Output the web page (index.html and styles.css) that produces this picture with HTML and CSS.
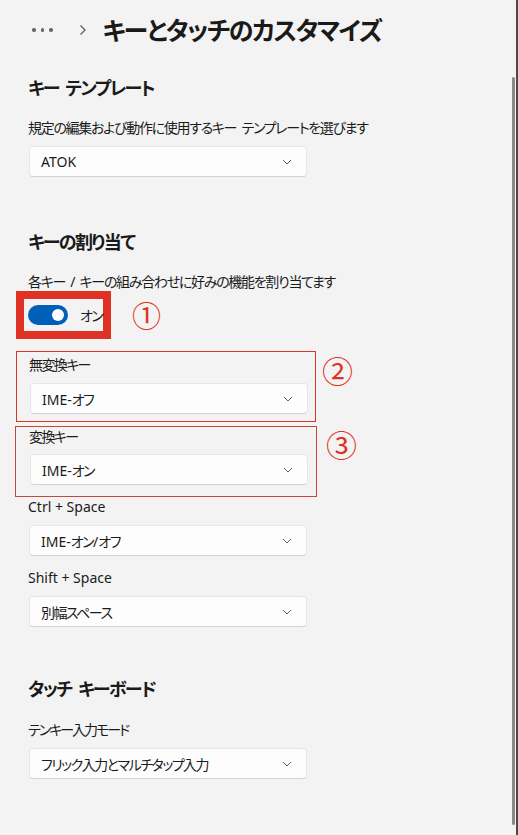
FILE: index.html
```html
<!DOCTYPE html>
<html lang="ja">
<head>
<meta charset="utf-8">
<link rel="stylesheet" href="styles.css">
</head>
<body>
<div class="page">
  <header class="header">
    <div class="dots"><span></span><span></span><span></span></div>
    <svg class="crumb" width="8" height="12" viewBox="0 0 8 12"><path d="M1.5 1.5 L6 6 L1.5 10.5" fill="none" stroke="#5c5c5c" stroke-width="1.3"/></svg>
    <h1 class="title">キーとタッチのカスタマイズ</h1>
  </header>

  <section class="sec sec-template">
    <h2 class="heading">キー テンプレート</h2>
    <p class="desc">規定の編集および動作に使用するキー テンプレートを選びます</p>
    <div class="dropdown"><span>ATOK</span><svg class="chev" width="10" height="6" viewBox="0 0 10 6"><path d="M1 1 L5 5 L9 1" fill="none" stroke="#606060" stroke-width="1"/></svg></div>
  </section>

  <section class="sec sec-assign">
    <h2 class="heading">キーの割り当て</h2>
    <p class="desc">各キー / キーの組み合わせに好みの機能を割り当てます</p>
    <div class="row row-toggle">
      <div class="mark-thick">
        <span class="toggle"><span class="thumb"></span></span>
        <span class="toggle-label ja">オン</span>
      </div>
      <span class="num num1">①</span>
    </div>
    <div class="row row-box2">
      <div class="mark-thin box2">
        <div class="label ja">無変換キー</div>
        <div class="dropdown"><span>IME-<span class="ja">オフ</span></span><svg class="chev" width="10" height="6" viewBox="0 0 10 6"><path d="M1 1 L5 5 L9 1" fill="none" stroke="#606060" stroke-width="1"/></svg></div>
      </div>
      <span class="num num2">②</span>
    </div>
    <div class="row row-box3">
      <div class="mark-thin box3">
        <div class="label ja">変換キー</div>
        <div class="dropdown"><span>IME-<span class="ja">オン</span></span><svg class="chev" width="10" height="6" viewBox="0 0 10 6"><path d="M1 1 L5 5 L9 1" fill="none" stroke="#606060" stroke-width="1"/></svg></div>
      </div>
      <span class="num num3">③</span>
    </div>
    <div class="field field-ctrl">
      <div class="label">Ctrl + Space</div>
      <div class="dropdown"><span>IME-<span class="ja">オン</span>/<span class="ja">オフ</span></span><svg class="chev" width="10" height="6" viewBox="0 0 10 6"><path d="M1 1 L5 5 L9 1" fill="none" stroke="#606060" stroke-width="1"/></svg></div>
    </div>
    <div class="field field-shift">
      <div class="label">Shift + Space</div>
      <div class="dropdown"><span class="ja">別幅スペース</span><svg class="chev" width="10" height="6" viewBox="0 0 10 6"><path d="M1 1 L5 5 L9 1" fill="none" stroke="#606060" stroke-width="1"/></svg></div>
    </div>
  </section>

  <section class="sec sec-touch">
    <h2 class="heading">タッチ キーボード</h2>
    <div class="field field-tenkey">
      <div class="label ja jal">テンキー入力モード</div>
      <div class="dropdown"><span class="ja">フリック入力とマルチタップ入力</span><svg class="chev" width="10" height="6" viewBox="0 0 10 6"><path d="M1 1 L5 5 L9 1" fill="none" stroke="#606060" stroke-width="1"/></svg></div>
    </div>
  </section>

  <div class="scrollbar"></div>
  <div class="edge"></div>
</div>
</body>
</html>
```

FILE: styles.css
```css
* { box-sizing: border-box; }
html, body { margin: 0; padding: 0; }
body {
  background: #f3f3f3;
  font-family: "Noto Sans", "Noto Sans CJK JP", sans-serif;
  font-feature-settings: "palt";
  color: #1b1b1b;
  width: 518px;
  height: 835px;
  overflow: hidden;
}
.page {
  position: relative;
  width: 518px;
  height: 835px;
}
.header {
  height: 60px;
  display: flex;
  align-items: center;
  padding-left: 32px;
}
.dots {
  display: flex;
  gap: 5px;
  align-items: center;
}
.dots span {
  width: 3.5px;
  height: 3.5px;
  border-radius: 50%;
  background: #666;
}
.crumb {
  margin-left: 26px;
}
.title {
  margin: -2px 0 0 16px;
  font-family: "Noto Sans CJK JP", sans-serif;
  font-size: 25px;
  font-weight: 600;
  line-height: 36px;
  letter-spacing: -1.5px;
  color: #1a1a1a;
}
.sec {
  padding-left: 28px;
}
.heading {
  margin: 0;
  font-family: "Noto Sans CJK JP", sans-serif;
  font-size: 18px;
  font-weight: 600;
  line-height: 28px;
  letter-spacing: -1.6px;
  word-spacing: 4px;
  color: #1a1a1a;
}
.sec-template { margin-top: 13px; }
.sec-assign { margin-top: 50px; }
.sec-touch { margin-top: 47px; }
.desc {
  margin: 17px 0 0 0;
  font-size: 14px;
  line-height: 20px;
  letter-spacing: -1.3px;
  word-spacing: 3px;
}
.ja { letter-spacing: -1.5px; }
.dropdown {
  width: 278px;
  height: 31px;
  margin-left: 1px;
  background: #fdfdfd;
  border: 1px solid #e6e6e6;
  border-bottom-color: #d2d2d2;
  border-radius: 4px;
  display: flex;
  align-items: center;
  justify-content: space-between;
  padding: 0 14px 0 11px;
  font-size: 14px;
  white-space: nowrap;
}
.sec-template .dropdown { margin-top: 8px; }
.chev { display: block; }
.row {
  display: flex;
  align-items: flex-start;
}
.row-toggle {
  margin-left: -12px;
  margin-top: -1px;
  align-items: center;
}
.mark-thick {
  border: 8px solid #e03224;
  height: 48px;
  width: 95px;
  flex-shrink: 0;
  display: flex;
  align-items: center;
  padding-left: 4px;
  white-space: nowrap;
}
.toggle {
  position: relative;
  width: 40px;
  height: 20px;
  border-radius: 10px;
  background: #005fb8;
  display: block;
  flex-shrink: 0;
}
.thumb {
  position: absolute;
  right: 4px;
  top: 4px;
  width: 12px;
  height: 12px;
  border-radius: 50%;
  background: #fff;
}
.toggle-label {
  margin-left: 12px;
  font-size: 14px;
}
.num {
  font-family: "Noto Sans CJK JP", sans-serif;
  color: #e03224;
  line-height: 1;
}
.num1 { font-size: 29px; margin-left: 21px; margin-top: -2px; }
.mark-thin {
  border: 1px solid #e03224;
}
.row-box2 { margin-left: -12px; margin-top: 12px; }
.box2 {
  width: 300px;
  height: 71px;
  padding: 3px 0 0 12px;
}
.num2 { font-size: 31px; margin-left: 6px; margin-top: 3px; }
.row-box3 { margin-left: -13px; margin-top: 4px; }
.box3 {
  width: 302px;
  height: 71px;
  padding: 0 0 0 13px;
  border-color: #c9463a;
}
.num3 { font-size: 31px; margin-left: 9px; margin-top: 2px; }
.label {
  font-size: 14px;
  line-height: 20px;
  margin-left: 0;
}
.label.ja { letter-spacing: -1.6px; }
.label.jal { letter-spacing: -2px; }
.box2 .label { margin-bottom: 8px; }
.box3 .label { margin-bottom: 7px; }
.field .label { margin-bottom: 8px; }
.field-ctrl { margin-top: 0; }
.field-shift { margin-top: 12px; }
.field-tenkey { margin-top: 18px; }
.scrollbar {
  position: absolute;
  left: 512px;
  top: 77px;
  width: 3px;
  height: 748px;
  border-radius: 2px;
  background: #8a8a8a;
}
.edge {
  position: absolute;
  left: 516px;
  top: 0;
  width: 2px;
  height: 835px;
  background: #4a4a4a;
}
```
